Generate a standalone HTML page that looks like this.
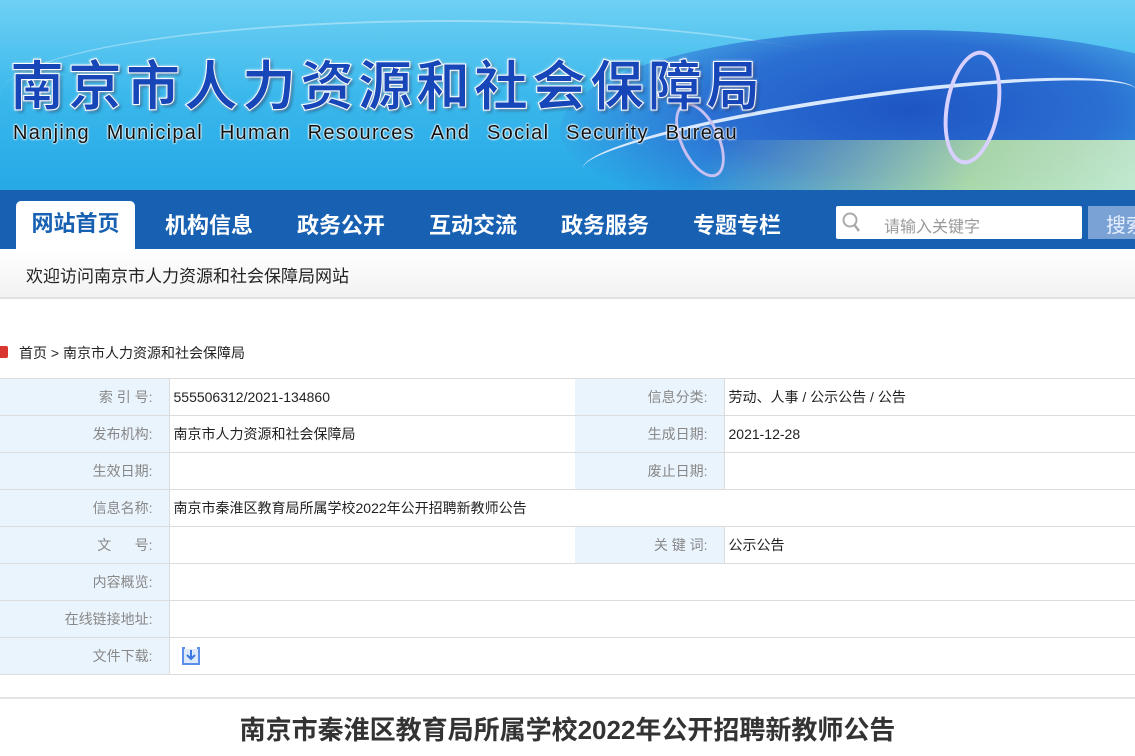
<!DOCTYPE html>
<html><head><meta charset="utf-8"><style>
*{margin:0;padding:0;box-sizing:border-box}
body{width:1135px;height:756px;overflow:hidden;background:#fff;font-family:"Liberation Sans","Noto Sans CJK SC",sans-serif;position:relative}
.banner{position:absolute;left:0;top:0;width:1135px;height:190px;overflow:hidden;
background:linear-gradient(180deg,#6fd0f3 0%,#3ab8ec 50%,#27a9e6 100%)}
.b1{position:absolute;left:560px;top:30px;width:700px;height:200px;border-radius:50%;background:radial-gradient(ellipse at 50% 40%,#1e56c4 0%,#2b6fd2 40%,rgba(40,130,220,0) 75%)}
.b2{position:absolute;left:0;top:20px;width:900px;height:150px;border-radius:50%;border-top:2px solid rgba(255,255,255,.35)}
.water{position:absolute;left:700px;top:140px;width:460px;height:60px;background:linear-gradient(90deg,rgba(60,120,200,0),#c8f0a0 60%,#e8ffd0);opacity:.8;transform:skewX(-30deg)}
.bridge{position:absolute;left:580px;top:95px;width:560px;height:70px;border-top:4px solid #d8e8ff;border-radius:50% 50% 0 0;transform:rotate(-8deg)}
.arch{position:absolute;left:945px;top:50px;width:55px;height:115px;border:4px solid #d8d0ff;border-radius:50%;transform:rotate(10deg)}
.arch2{position:absolute;left:680px;top:100px;width:40px;height:80px;border:3px solid #c8c0f0;border-radius:50%;transform:rotate(-25deg)}
.t1{position:absolute;left:10px;top:42px;font-size:54px;font-weight:bold;color:#1746b8;letter-spacing:4px;font-family:"Noto Sans CJK SC",sans-serif;-webkit-text-stroke:1px #fff;text-shadow:0 0 3px #fff,2px 2px 3px rgba(0,0,40,.5)}
.t2{position:absolute;left:13px;top:122px;font-size:20px;color:#111;word-spacing:10px;letter-spacing:1.3px;text-shadow:0 0 2px #fff,0 0 2px #fff,0 0 2px #fff}
.nav{position:absolute;left:0;top:190px;width:1135px;height:59px;background:#1760b2}
.nav .it{position:absolute;top:18px;font-size:22px;font-weight:bold;color:#fff}
.nav .act{position:absolute;left:16px;top:11px;width:119px;height:48px;background:#fff;border-radius:5px 5px 0 0;color:#1760b2;font-size:22px;font-weight:bold;text-align:center;line-height:46px}
.search{position:absolute;left:836px;top:16px;width:246px;height:33px;background:#fff;border-radius:2px}
.search span{position:absolute;left:48px;top:7px;font-size:16px;color:#999}
.btn{position:absolute;left:1088px;top:16px;width:60px;height:33px;background:#7ba2d4;color:#e8f0ff;font-size:20px;padding:3px 0 0 18px}
.welcome{position:absolute;left:0;top:249px;width:1135px;height:50px;background:linear-gradient(180deg,#fff,#f2f2f2);border-bottom:2px solid #e0e0e0;font-size:17px;color:#222;padding:13px 0 0 26px}
.crumb{position:absolute;left:0;top:343px;font-size:14px;color:#222}
.crumb i{position:absolute;left:-4px;top:3px;width:12px;height:12px;background:#d9362f;border-radius:2px}
table{position:absolute;left:0;top:378px;width:1135px;border-collapse:collapse;font-size:14px}
td{height:37px;border-top:1px solid #dcdcdc;border-bottom:1px solid #dcdcdc;border-left:1px solid #dcdcdc;color:#222;padding-left:4px}
td.l{background:#eaf4fd;color:#888;text-align:right;padding-right:16px;padding-left:0;border-left:none}
.hr{position:absolute;left:0;top:697px;width:1135px;height:2px;background:#e4e4e4}
.title{position:absolute;left:0;width:1135px;top:710px;text-align:center;font-size:26px;font-weight:bold;color:#333}
</style></head><body>
<div class="banner">
<div class="b2"></div><div class="b1"></div><div class="water"></div><div class="bridge"></div><div class="arch"></div><div class="arch2"></div>
<div class="t1">南京市人力资源和社会保障局</div>
<div class="t2">Nanjing Municipal Human Resources And Social Security Bureau</div>
</div>
<div class="nav">
<div class="act">网站首页</div>
<div class="it" style="left:165px">机构信息</div>
<div class="it" style="left:297px">政务公开</div>
<div class="it" style="left:429px">互动交流</div>
<div class="it" style="left:561px">政务服务</div>
<div class="it" style="left:693px">专题专栏</div>
<div class="search"><svg style="position:absolute;left:6px;top:6px" width="20" height="22" viewBox="0 0 20 22"><circle cx="8" cy="8" r="6.5" fill="none" stroke="#aaa" stroke-width="2"/><line x1="12.5" y1="13" x2="17" y2="19" stroke="#aaa" stroke-width="2.5"/></svg><span>请输入关键字</span></div>
<div class="btn">搜索</div>
</div>
<div class="welcome">欢迎访问南京市人力资源和社会保障局网站</div>
<div class="crumb"><i></i><span style="margin-left:19px">首页 &gt; 南京市人力资源和社会保障局</span></div>
<table>
<colgroup><col style="width:169px"><col style="width:406px"><col style="width:149px"><col></colgroup>
<tr><td class="l">索 引 号:</td><td>555506312/2021-134860</td><td class="l">信息分类:</td><td>劳动、人事 / 公示公告 / 公告</td></tr>
<tr><td class="l">发布机构:</td><td>南京市人力资源和社会保障局</td><td class="l">生成日期:</td><td>2021-12-28</td></tr>
<tr><td class="l">生效日期:</td><td></td><td class="l">废止日期:</td><td></td></tr>
<tr><td class="l">信息名称:</td><td colspan="3">南京市秦淮区教育局所属学校2022年公开招聘新教师公告</td></tr>
<tr><td class="l">文&nbsp;&nbsp;&nbsp;&nbsp;&nbsp;&nbsp;号:</td><td></td><td class="l">关 键 词:</td><td>公示公告</td></tr>
<tr><td class="l">内容概览:</td><td colspan="3"></td></tr>
<tr><td class="l">在线链接地址:</td><td colspan="3"></td></tr>
<tr><td class="l">文件下载:</td><td colspan="3"><svg style="margin-left:7px;vertical-align:middle" width="20" height="20" viewBox="0 0 20 20"><path d="M4 2H2v16h16V2h-2" fill="none" stroke="#5b8fe8" stroke-width="2"/><rect x="3" y="3" width="14" height="14" fill="#dde9fb"/><path d="M10 4v9M6 9l4 4 4-4" fill="none" stroke="#3b78e0" stroke-width="2"/></svg></td></tr>
</table>
<div class="hr"></div>
<div class="title">南京市秦淮区教育局所属学校2022年公开招聘新教师公告</div>
</body></html>
